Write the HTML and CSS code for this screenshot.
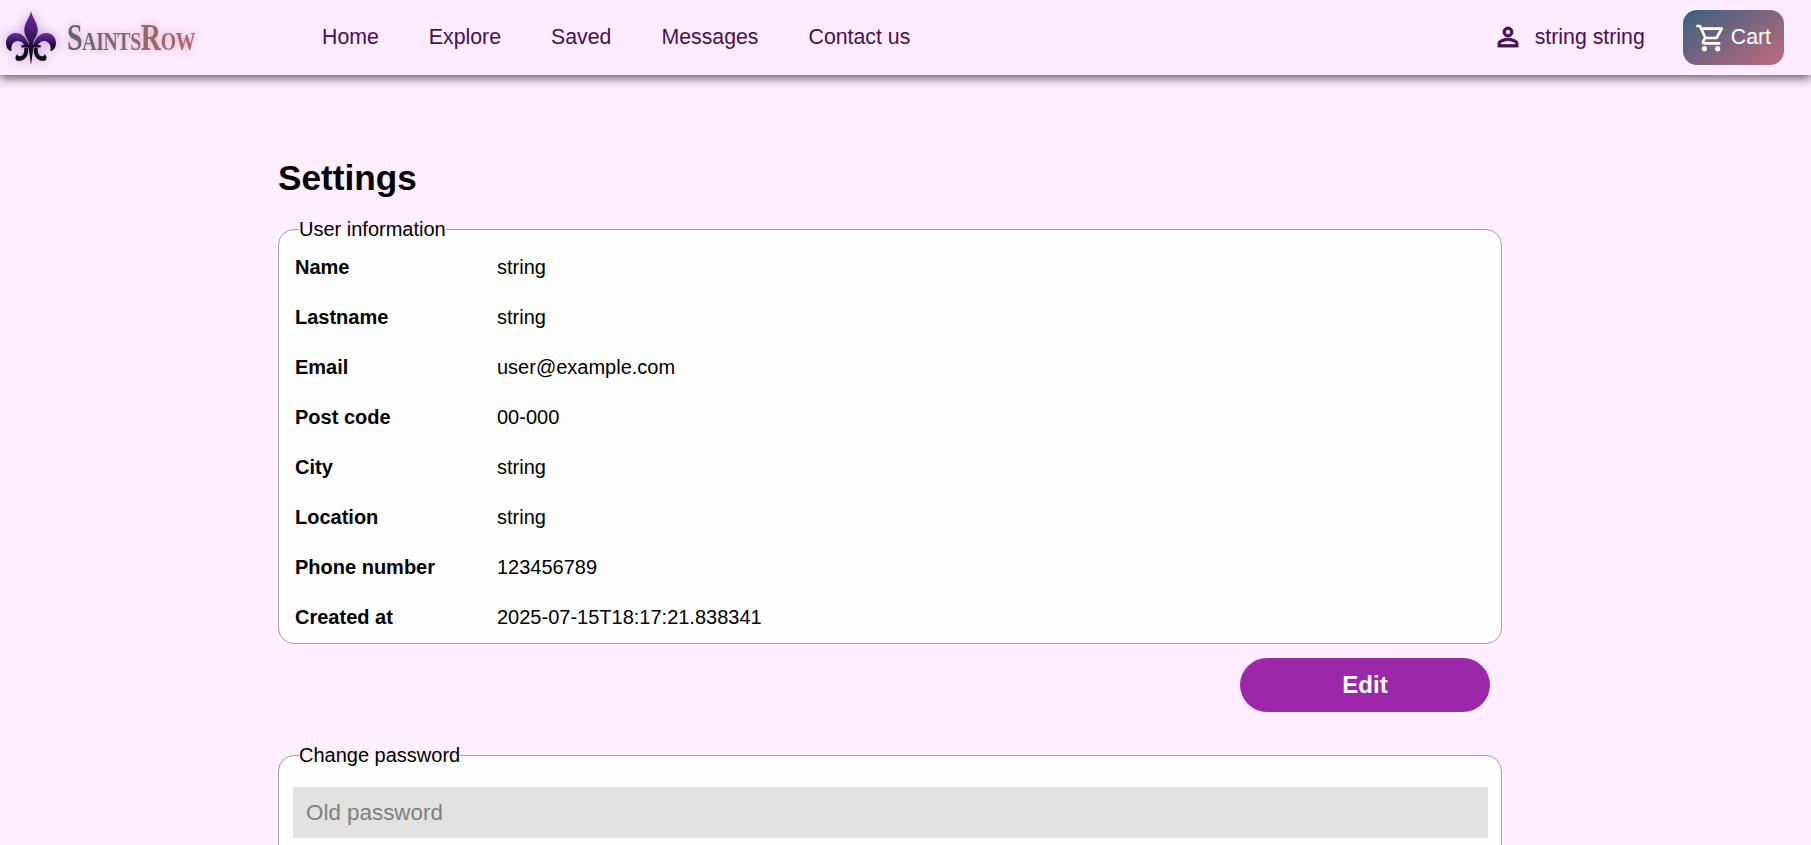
FILE: index.html
```html
<!DOCTYPE html>
<html lang="en">
<head>
<meta charset="UTF-8" />
<title>SaintsRow - Settings</title>
<link rel="stylesheet" href="styles.css">
</head>
<body>

<header class="topbar">
  <a class="logo" href="#">
    <svg class="logo-mark" viewBox="0 0 52 56" width="50" height="56" preserveAspectRatio="none">
      <defs>
        <linearGradient id="fleur" x1="0" y1="0" x2="0" y2="1">
          <stop offset="0" stop-color="#6a2f9c" />
          <stop offset="0.5" stop-color="#3c1462" />
          <stop offset="0.72" stop-color="#170a24" />
          <stop offset="1" stop-color="#0c0c0c" />
        </linearGradient>
      </defs>
      <path fill="url(#fleur)" d="M26 1 C27 7 33 13 33 20 C33 26 29 29 28.500 33 L28.500 35 L36 35 L36 37.500 L28.500 37.500 L26 55 L23.500 37.500 L16 37.500 L16 35 L23.500 35 L23.500 33 C23 29 19 26 19 20 C19 13 25 7 26 1 Z" />
      <path fill="url(#fleur)" d="M24 36 C22 28 16 22 9 23 C3 24 0 28 0 33 C0 38 3 41 6 41 C5 37 6 33 10 31.500 C15 30 18 33 21 38 Z" />
      <path fill="url(#fleur)" d="M28 36 C30 28 36 22 43 23 C49 24 52 28 52 33 C52 38 49 41 46 41 C47 37 46 33 42 31.500 C37 30 34 33 31 38 Z" />
      <path fill="#14101a" d="M23 38 C24 45 20 51 13 51 C9 51 9 46 12 44 C12 47 16 47 18 44 C19 42 19 40 19 38 Z" />
      <path fill="#14101a" d="M29 38 C28 45 32 51 39 51 C43 51 43 46 40 44 C40 47 36 47 34 44 C33 42 33 40 33 38 Z" />
    </svg>
    <span class="logo-text">SaintsRow</span>
  </a>

  <nav class="nav">
    <a href="#">Home</a>
    <a href="#">Explore</a>
    <a href="#">Saved</a>
    <a href="#">Messages</a>
    <a href="#">Contact us</a>
  </nav>

  <div class="account">
    <a class="user" href="#">
      <svg viewBox="0 0 24 24" width="30" height="30"><path fill="currentColor" stroke="currentColor" stroke-width="0.7" d="M12 5.900a2.100 2.100 0 1 1 0 4.200 2.100 2.100 0 0 1 0-4.200m0 9c2.970 0 6.100 1.460 6.100 2.100v1.100H5.900V17c0-.640 3.130-2.100 6.100-2.100M12 4C9.790 4 8 5.790 8 8s1.790 4 4 4 4-1.790 4-4-1.790-4-4-4zm0 9c-2.670 0-8 1.340-8 4v3h16v-3c0-2.660-5.330-4-8-4z"/></svg>
      <span>string string</span>
    </a>
    <a class="cart" href="#">
      <svg viewBox="0 0 24 24" width="32" height="32"><path fill="currentColor" d="M15.55 13c.75 0 1.41-.41 1.75-1.03l3.58-6.49A.996.996 0 0 0 20.01 4H5.21l-.94-2H1v2h2l3.6 7.59-1.35 2.44C4.52 15.37 5.48 17 7 17h12v-2H7l1.1-2h7.45zM6.16 6h12.15l-2.76 5H8.53L6.16 6zM7 18c-1.1 0-1.99.9-1.99 2S5.900 22 7 22s2-.9 2-2-.9-2-2-2zm10 0c-1.1 0-1.99.9-1.99 2s.89 2 1.99 2 2-.9 2-2-.9-2-2-2z"/></svg>
      <span>Cart</span>
    </a>
  </div>
</header>

<main class="settings">
  <h1>Settings</h1>

  <fieldset class="panel">
    <legend>User information</legend>
    <div class="info-row"><span class="info-label">Name</span><span>string</span></div>
    <div class="info-row"><span class="info-label">Lastname</span><span>string</span></div>
    <div class="info-row"><span class="info-label">Email</span><span>user@example.com</span></div>
    <div class="info-row"><span class="info-label">Post code</span><span>00-000</span></div>
    <div class="info-row"><span class="info-label">City</span><span>string</span></div>
    <div class="info-row"><span class="info-label">Location</span><span>string</span></div>
    <div class="info-row"><span class="info-label">Phone number</span><span>123456789</span></div>
    <div class="info-row"><span class="info-label">Created at</span><span>2025-07-15T18:17:21.838341</span></div>
  </fieldset>

  <div class="actions">
    <button class="btn" type="button">Edit</button>
  </div>

  <fieldset class="panel panel-password">
    <legend>Change password</legend>
    <input class="field" type="password" placeholder="Old password" />
  </fieldset>
</main>

</body>
</html>
```

FILE: styles.css
```css
html, body {
  margin: 0;
  height: 100%;
  overflow: hidden;
}
body {
  display: flex;
  flex-direction: column;
  font-family: "Liberation Sans", Arial, sans-serif;
  background: #ffeeff;
  color: #000;
}
a {
  text-decoration: none;
  color: inherit;
}

.topbar {
  display: flex;
  flex-shrink: 0;
  align-items: center;
  height: 75px;
  padding: 0 27px 0 6px;
  background: #fdebff;
  color: #4a0f50;
  font-size: 21.3px;
  box-shadow: 0 3px 10px rgba(40, 25, 40, 0.75);
}
.logo {
  display: flex;
  align-items: center;
  gap: 11px;
  width: 316px;
}
.logo-mark {
  filter: drop-shadow(0 0 6px rgba(90, 40, 150, 0.4));
}
.logo-text {
  font-family: "Liberation Serif", serif;
  font-size: 37px;
  font-variant: small-caps;
  font-weight: 700;
  letter-spacing: -0.5px;
  background: linear-gradient(100deg, #5c6478, #b8666c);
  -webkit-background-clip: text;
  background-clip: text;
  color: transparent;
  filter: drop-shadow(0 0 4px rgba(190, 110, 110, 0.5));
  transform: scaleX(0.76);
  transform-origin: left center;
}
.nav {
  display: flex;
  gap: 50px;
  margin-bottom: 1px;
}
.account {
  display: flex;
  align-items: center;
  gap: 38px;
  margin-left: auto;
}
.user {
  display: flex;
  align-items: center;
  gap: 12px;
  margin-bottom: 1px;
}
.cart {
  display: flex;
  align-items: center;
  gap: 4px;
  height: 55px;
  padding: 0 13px 0 12px;
  box-sizing: border-box;
  border-radius: 14px;
  background: linear-gradient(145deg, #38607f, #c26a80);
  color: #fff;
}

.settings {
  flex: 1;
  min-height: 0;
  overflow: hidden;
  width: 1224px;
  margin-left: 278px;
}
h1 {
  margin: 0;
  padding: 83px 0 19px;
  font-size: 35.2px;
  line-height: 40px;
}
.panel {
  margin: 0;
  padding: 0 13px 1px 14px;
  border: 1px solid #a3a0a3;
  border-radius: 16px;
  background: #fdfdfd;
  font-size: 20px;
}
.panel-password {
  min-height: 120px;
}
.panel legend {
  margin-left: 6px;
  padding: 0;
  line-height: 25px;
}
.info-row {
  display: flex;
  align-items: center;
  height: 50px;
  padding-left: 2px;
}
.info-label {
  width: 202px;
  font-weight: 700;
}
.actions {
  display: flex;
  justify-content: flex-end;
  padding: 14px 12px 31px 0;
}
.btn {
  width: 250px;
  height: 54px;
  border: none;
  border-radius: 27px;
  background: #9c27a9;
  color: #fff;
  font-family: inherit;
  font-size: 24px;
  font-weight: 700;
  cursor: pointer;
}
.field {
  display: block;
  width: 100%;
  height: 51px;
  margin-top: 19px;
  padding: 0 13px;
  box-sizing: border-box;
  border: none;
  background: #e2e2e2;
  font-family: inherit;
  font-size: 22.4px;
}
.field::placeholder {
  color: #808080;
}
```
